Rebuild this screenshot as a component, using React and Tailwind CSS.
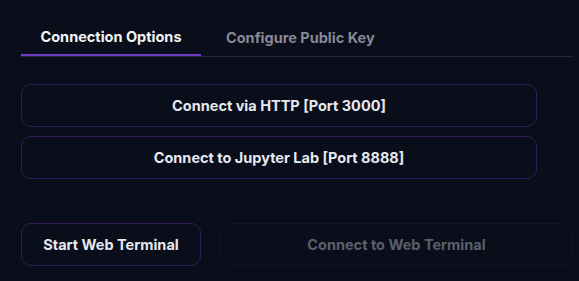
export default function App() {
  return (
    <div className="min-h-screen w-full bg-[#0a0d1a] text-[14.5px] font-bold" style={{ fontFamily: "Inter, 'Liberation Sans', sans-serif" }}>
      <div className="pl-[21px] pr-[6px] pt-5">
        <div className="flex border-b border-[#262a38]">
          <div className="h-9 w-[180px] flex items-center justify-center text-[#f3f4f6] border-b-2 border-[#6d3fc7] -mb-px">
            Connection Options
          </div>
          <div className="h-9 pl-[25px] pr-5 flex items-center text-[#858a96]">
            Configure Public Key
          </div>
        </div>
        <div className="mt-[27px] flex flex-col gap-[9px] w-[516px]">
          <button className="h-[43px] rounded-[10px] border border-[#311c5e] text-[#e5e9f0] flex items-center justify-center">
            Connect via HTTP [Port 3000]
          </button>
          <button className="h-[43px] rounded-[10px] border border-[#311c5e] text-[#e5e9f0] flex items-center justify-center">
            Connect to Jupyter Lab [Port 8888]
          </button>
        </div>
        <div className="mt-[44px] flex gap-[19px]">
          <button className="h-[43px] w-[180px] rounded-[10px] border border-[#311c5e] text-[#e5e9f0] flex items-center justify-center">
            Start Web Terminal
          </button>
          <button className="h-[43px] flex-1 rounded-[10px] border border-[#11142a] text-[#5b606c] flex items-center justify-center">
            Connect to Web Terminal
          </button>
        </div>
      </div>
    </div>
  );
}
